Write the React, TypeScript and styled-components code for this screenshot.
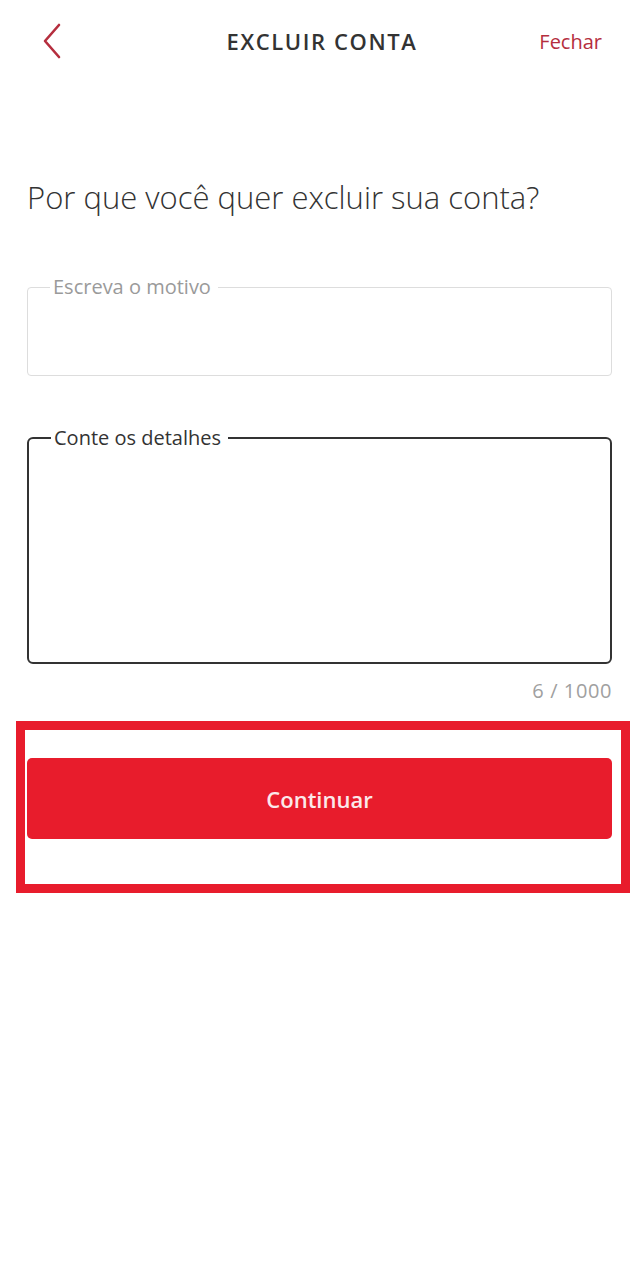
import styled, { createGlobalStyle } from 'styled-components';

const GlobalStyle = createGlobalStyle`
	html, body {
		margin: 0;
		padding: 0;
		background: #ffffff;
	}

	body {
		font-family: 'Open Sans', 'Noto Sans', sans-serif;
		color: #333333;
	}
`;

const Page = styled.div`
	width: 639px;
	min-height: 1280px;
	background: #ffffff;
`;

const Header = styled.header`
	display: grid;
	grid-template-columns: 1fr auto 1fr;
	align-items: center;
	height: 82px;
	padding: 0 37px 0 42px;
`;

const BackButton = styled.button`
	justify-self: start;
	display: flex;
	padding: 0;
	border: none;
	background: none;
	color: #b52e3e;
	cursor: pointer;
`;

const HeaderTitle = styled.h1`
	margin: 0;
	font-size: 22px;
	font-weight: 600;
	letter-spacing: 1.6px;
	color: #333333;
`;

const CloseLink = styled.button`
	justify-self: end;
	padding: 0;
	border: none;
	background: none;
	font-family: inherit;
	font-size: 20px;
	color: #b52e3e;
	cursor: pointer;
`;

const Content = styled.main`
	display: flex;
	flex-direction: column;
	padding: 94px 27px 0;
`;

const Question = styled.h2`
	margin: 0 0 59px;
	font-size: 31px;
	font-weight: 300;
	color: #333333;
`;

const Field = styled.fieldset<{ $active?: boolean; $height: number }>`
	margin: 0;
	padding: 0 16px;
	height: ${({ $height }) => $height}px;
	border: ${({ $active }) => ($active ? '2px solid #333333' : '1px solid #dddddd')};
	border-radius: ${({ $active }) => ($active ? '6px' : '4px')};
	box-sizing: border-box;

	& + & {
		margin-top: 52px;
	}
`;

const Legend = styled.legend<{ $active?: boolean }>`
	margin-left: 6px;
	padding: 0 7px 0 3px;
	font-size: 20px;
	line-height: 20px;
	color: ${({ $active }) => ($active ? '#333333' : '#9a9a9a')};
`;

const Counter = styled.div`
	align-self: flex-end;
	margin-top: 13px;
	font-size: 20px;
	letter-spacing: 0.6px;
	color: #a0a0a0;
`;

const Highlight = styled.section`
	margin: 17px 9px 0 16px;
	padding: 28px 9px 45px 2px;
	border: 9px solid #e81c2c;
`;

const ContinueButton = styled.button`
	width: 100%;
	height: 81px;
	border: none;
	border-radius: 5px;
	background: #e81c2c;
	font-family: inherit;
	font-size: 22px;
	font-weight: 600;
	color: #fbe9ea;
	cursor: pointer;
`;

const ChevronLeft = () => (
	<svg width="20" height="36" viewBox="0 0 20 36" fill="none">
		<path d="M17 2 L3 18 L17 34" stroke="currentColor" strokeWidth="2.6" strokeLinecap="round" strokeLinejoin="round" />
	</svg>
);

const App = () => (
	<Page>
		<GlobalStyle />
		<Header>
			<BackButton aria-label="Voltar">
				<ChevronLeft />
			</BackButton>
			<HeaderTitle>EXCLUIR CONTA</HeaderTitle>
			<CloseLink>Fechar</CloseLink>
		</Header>
		<Content>
			<Question>Por que você quer excluir sua conta?</Question>
			<Field $height={99}>
				<Legend>Escreva o motivo</Legend>
			</Field>
			<Field $active $height={236}>
				<Legend $active>Conte os detalhes</Legend>
			</Field>
			<Counter>6 / 1000</Counter>
		</Content>
		<Highlight>
			<ContinueButton>Continuar</ContinueButton>
		</Highlight>
	</Page>
);

export default App;
